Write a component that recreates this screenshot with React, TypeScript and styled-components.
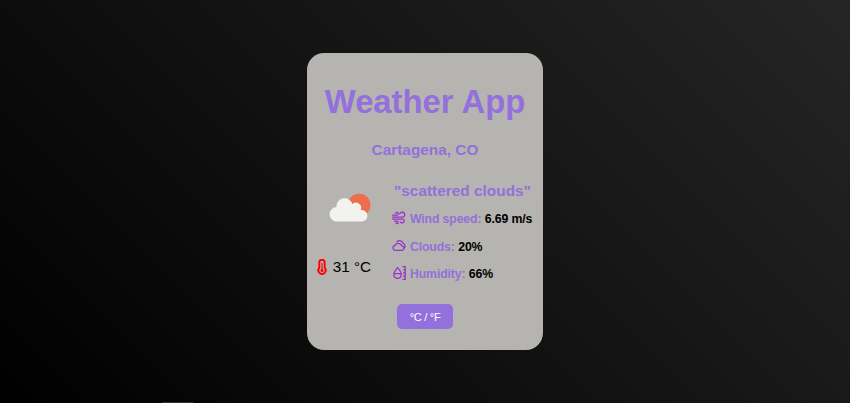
import React from "react";
import styled, { createGlobalStyle } from "styled-components";

const GlobalStyle = createGlobalStyle`
  * { box-sizing: border-box; }
  body {
    margin: 0;
    font-family: "Liberation Sans", Arial, sans-serif;
    background: #000;
  }
`;

const Page = styled.main`
  display: flex;
  flex-direction: column;
  justify-content: space-between;
  align-items: center;
  height: 403px;
  padding-top: 52.5px;
  overflow: hidden;
  background: linear-gradient(45deg, #000 0%, #252525 100%);
`;

const Card = styled.section`
  display: flex;
  flex-direction: column;
  align-items: center;
  width: 236px;
  height: 297.5px;
  padding-top: 30px;
  border-radius: 17px;
  background: #b5b4b0;
  white-space: nowrap;
`;

const BottomMark = styled.div`
  align-self: flex-start;
  width: 31px;
  height: 1px;
  margin-left: 162px;
  background: #333;
`;

const Title = styled.h1`
  margin: 0;
  font-size: 32.8px;
  line-height: 38px;
  color: mediumpurple;
`;

const City = styled.h2`
  margin: 20px 0 0;
  font-size: 15.4px;
  line-height: 18px;
  color: mediumpurple;
`;

const Weather = styled.div`
  display: grid;
  grid-template-columns: 76px 1fr;
  width: 100%;
  height: 130px;
  margin-top: 15px;
  padding-left: 10px;
`;

const Summary = styled.div`
  display: flex;
  flex-direction: column;
`;

const SkyIcon = styled.svg`
  width: 43px;
  height: 29px;
  margin: 19px 0 0 11px;
`;

const Temperature = styled.p`
  display: flex;
  align-items: center;
  gap: 5.5px;
  height: 18px;
  margin: 36px 0 0 0.2px;
  font-size: 15.3px;
  color: #000;
`;

const TempIcon = styled.svg`
  width: 10px;
  height: 16px;
`;

const Details = styled.div`
  padding-top: 8.5px;
`;

const Condition = styled.h3`
  margin: 0 0 10px 1px;
  font-size: 15.4px;
  line-height: 18px;
  color: mediumpurple;
`;

const Metric = styled.p`
  display: flex;
  align-items: center;
  height: 18px;
  margin: 0 0 9.7px;
  font-size: 12.3px;
  letter-spacing: -0.15px;
  font-weight: bold;
  color: mediumpurple;
`;

const MetricIcon = styled.svg`
  width: 14px;
  height: 14px;
  margin: -2px 4px 0 -1px;
  fill: none;
  stroke: darkorchid;
  stroke-width: 1.3;
  stroke-linecap: round;
  stroke-linejoin: round;
`;

const Value = styled.span`
  margin-left: 3.5px;
  color: #000;
`;

const UnitButton = styled.button`
  width: 56px;
  height: 25px;
  padding: 0;
  margin-top: 0.5px;
  border: 0;
  border-radius: 5px;
  background: mediumpurple;
  color: #fff;
  font: 11.2px "Liberation Sans", Arial, sans-serif;
  letter-spacing: -0.35px;
`;

const icons = {
  wind: (
    <>
      <path d="M0.7 4.2h4.2a1.4 1.4 0 1 0-1.3-2" />
      <path d="M0.7 6.2h9.5a2.5 2.5 0 1 0-2.4-3.3" />
      <path d="M0.7 8.2h9.6a1.9 1.9 0 1 1-1.8 2.6" />
      <path d="M2.7 10.2h2.4a1.2 1.2 0 1 1-1.1 1.7" />
    </>
  ),
  clouds: (
    <>
      <path d="M3.1 11.4h6.4a2.3 2.3 0 0 0 .3-4.6 3.8 3.8 0 0 0-7-.3A2.5 2.5 0 0 0 3.1 11.4Z" />
      <path d="M5 2.9a3.6 3.6 0 0 1 6.2 1.6 2.7 2.7 0 0 1 1.2 4.3" />
    </>
  ),
  humidity: (
    <>
      <path d="M5.5 1.6C4.2 3.3 1.8 5.8 1.8 8.6a3.75 3.75 0 0 0 7.5 0c0-2.8-2.4-5.3-3.8-7ZM2.1 7.6h6.8" />
      <path d="M11 0.7h2.2v12.6H11M11.6 3.8h1.6m-1.6 3.2h1.6m-1.6 3.2h1.6" />
    </>
  ),
};

const metrics: { icon: keyof typeof icons; label: string; value: string }[] = [
  { icon: "wind", label: "Wind speed:", value: "6.69 m/s" },
  { icon: "clouds", label: "Clouds:", value: "20%" },
  { icon: "humidity", label: "Humidity:", value: "66%" },
];

export default function App() {
  return (
    <Page>
      <GlobalStyle />
      <Card>
        <Title>Weather App</Title>
        <City>Cartagena, CO</City>
        <Weather>
          <Summary>
            <SkyIcon viewBox="0 0 43 29">
              <circle cx="31.2" cy="12" r="11.3" fill="#ec6e4c" />
              <path
                d="M8 28.5A7.3 7.3 0 0 1 8 14h.3a8.3 8.3 0 0 1 16.2-3 5.2 5.2 0 0 1 8.2 6h1a5.75 5.75 0 0 1 0 11.5Z"
                fill="#f2f2ef"
              />
            </SkyIcon>
            <Temperature>
              <TempIcon viewBox="0 0 10 16" fill="none" stroke="#f00">
                <path
                  d="M2.3 8.9V3.6a2.7 2.7 0 0 1 5.4 0v5.3a3.6 3.6 0 1 1-5.4 0Z"
                  strokeWidth="1.9"
                />
                <path d="M5 4v7" strokeWidth="1.2" />
                <circle cx="5" cy="11.4" r="1.5" fill="#f00" stroke="none" />
              </TempIcon>
              31 °C
            </Temperature>
          </Summary>
          <Details>
            <Condition>"scattered clouds"</Condition>
            {metrics.map(({ icon, label, value }) => (
              <Metric key={label}>
                <MetricIcon viewBox="0 0 14 14">{icons[icon]}</MetricIcon>
                {label}
                <Value>{value}</Value>
              </Metric>
            ))}
          </Details>
        </Weather>
        <UnitButton>°C / °F</UnitButton>
      </Card>
      <BottomMark />
    </Page>
  );
}
